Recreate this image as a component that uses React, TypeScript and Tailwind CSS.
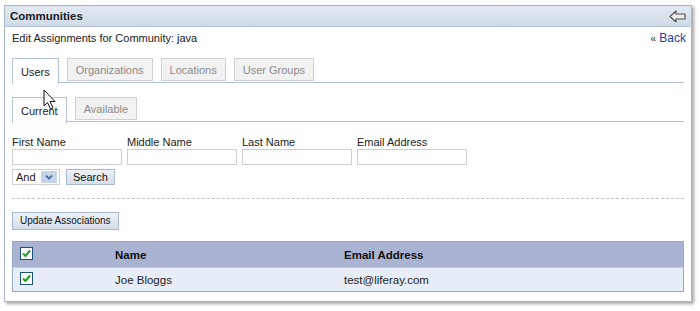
const Check = () => (
  <span className="inline-flex h-[13px] w-[13px] items-center justify-center border border-[#1c5180] bg-white">
    <svg width="11" height="11" viewBox="0 0 11 11">
      <path d="M2 5.5 L4.5 8 L9 2.5" stroke="#21a121" strokeWidth="2" fill="none" />
    </svg>
  </span>
)

const Tab = ({ label, active }: { label: string; active?: boolean }) =>
  active ? (
    <div className="-mb-px h-[26px] border border-b-0 border-[#b4c3d6] bg-white px-[8px] pt-[6px] leading-[14px] text-[#222]">{label}</div>
  ) : (
    <div className="mb-[1px] h-[23px] self-end border border-[#d0d0d0] bg-[#f2f2f2] px-[8px] pt-[4px] leading-[14px] text-[#8a8a8a]">{label}</div>
  )

const Field = ({ label }: { label: string }) => (
  <div className="flex w-[110px] flex-col">
    <span className="leading-[14px] text-[#222]">{label}</span>
    <div className="h-[16px] border border-[#cfcfcf] bg-white" />
  </div>
)

const App = () => {
  return (
    <div className="relative h-[311px] w-[700px] bg-white pl-[4px] pt-[5px] text-[11px] leading-[14px]" style={{ fontFamily: '"Liberation Sans", Arial, sans-serif' }}>
      <div className="w-[688px] border border-[#a9b7c9] bg-white shadow-[2px_2px_3px_rgba(0,0,0,0.35)]">
        <div className="flex h-[21px] items-center justify-between border-b border-[#b3c2d4] bg-gradient-to-b from-[#e2e9f2] to-[#d0dbe8] pl-[5px] pr-[4px]">
          <span className="text-[11.5px] font-bold text-[#1a1a1a]">Communities</span>
          <svg width="18" height="13" viewBox="0 0 18 13">
            <path d="M1 6.5 L7 1 V4 H16 V9 H7 V12 Z" fill="#e9e9e9" stroke="#555" strokeWidth="1.2" strokeLinejoin="round" />
          </svg>
        </div>
        <div className="px-[7px] pb-[9px]">
          <div className="flex items-center justify-between pt-[3px]">
            <span className="text-[#222]">Edit Assignments for Community: java</span>
            <span className="mr-[-2px] mt-[1px] text-[12px] text-[#1f3f9e]"><span className="text-[10px] text-[#333]">«</span> Back</span>
          </div>
          <div className="mt-[12px] flex h-[25px] gap-[8px] border-b border-[#b4c3d6]">
            <Tab label="Users" active />
            <Tab label="Organizations" />
            <Tab label="Locations" />
            <Tab label="User Groups" />
          </div>
          <div className="mt-[14px] flex h-[25px] gap-[8px] border-b border-[#b4c3d6]">
            <Tab label="Current" active />
            <Tab label="Available" />
          </div>
          <div className="mt-[13px] flex gap-[5px]">
            <Field label="First Name" />
            <Field label="Middle Name" />
            <Field label="Last Name" />
            <Field label="Email Address" />
          </div>
          <div className="mt-[4px] flex items-center gap-[6px]">
            <div className="flex h-[16px] w-[48px] items-center justify-between border border-[#cfcfcf] bg-white pl-[3px] pr-[2px] text-[#222]">
              <span className="leading-none">And</span>
              <span className="flex h-[12px] w-[16px] items-center justify-center bg-[#c6d4ea]">
                <svg width="8" height="6" viewBox="0 0 8 6"><path d="M1 1.5 L4 4.5 L7 1.5" stroke="#3a5da0" strokeWidth="1.6" fill="none" /></svg>
              </span>
            </div>
            <div className="flex h-[16px] items-center border border-[#a9b9cf] bg-gradient-to-b from-[#eef2f8] to-[#d5deea] px-[6px] text-[#111]">Search</div>
          </div>
          <div className="mt-[13px] border-t border-dashed border-[#b8c4d4]" />
          <div className="mt-[13px] inline-flex h-[18px] items-center border border-[#a9b9cf] bg-gradient-to-b from-[#eef2f8] to-[#d5deea] px-[7px] text-[10px] text-[#111]">Update Associations</div>
          <div className="mt-[11px] border border-[#98a8c6]">
            <div className="flex h-[25px] items-center bg-[#aab4d2] text-[11.5px] font-bold text-[#111]">
              <div className="w-[102px] pl-[7px]"><Check /></div>
              <div className="w-[229px]">Name</div>
              <div>Email Address</div>
            </div>
            <div className="flex h-[24px] items-center border-t border-[#c3cde0] bg-[#e8eef7] text-[11.5px] text-[#222]">
              <div className="w-[102px] pl-[7px]"><Check /></div>
              <div className="w-[229px]">Joe Bloggs</div>
              <div>test@liferay.com</div>
            </div>
          </div>
        </div>
      </div>
      <svg className="absolute left-[43px] top-[89px]" width="14" height="22" viewBox="0 0 14 22">
        <path d="M1 1 V17 L4.5 13.5 L7.5 20 L10 19 L7 12.5 H12 Z" fill="white" stroke="#111" strokeWidth="1" strokeLinejoin="round" />
      </svg>
    </div>
  )
}

export default App
